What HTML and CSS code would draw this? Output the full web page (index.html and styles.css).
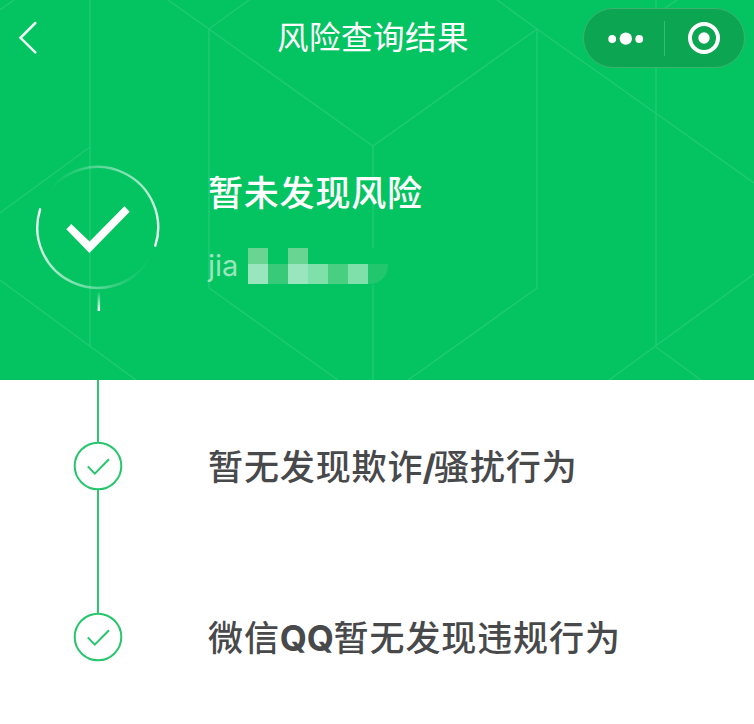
FILE: index.html
```html
<!DOCTYPE html>
<html lang="zh-CN">
<head>
<meta charset="utf-8">
<title>风险查询结果</title>
<link rel="stylesheet" href="styles.css">
</head>
<body>
<header class="hero">
  <svg class="pattern" viewBox="0 0 754 380" aria-hidden="true">
    <path d="M90 0V347M209 29V288M373 146V248M373 285V380M537 29V288M656 0V347M0 10L14 0M168 0L373 146L537 29L497 0M209 29L249 0M537 29L754 183M656 14L677 0M90 147L0 213M0 280L136 380M209 288L338 380M537 288L408 380M609 380L754 274M656 347L701 380"/>
  </svg>
  <nav class="navbar">
    <svg class="back" viewBox="0 0 20 34"><path d="M17.3 2L2.5 16.8L17.3 31.3"/></svg>
    <h1 class="title">风险查询结果</h1>
    <div class="capsule">
      <svg class="dots" viewBox="0 0 36 14"><circle cx="4.2" cy="8" r="3.9"/><circle cx="17.8" cy="7.6" r="6.2"/><circle cx="31.2" cy="8" r="3.9"/></svg>
      <span class="divider"></span>
      <svg class="target" viewBox="0 0 32 32"><circle class="ring" cx="16" cy="16" r="14"/><circle cx="16" cy="16" r="5.7"/></svg>
    </div>
  </nav>
  <section class="summary">
    <svg class="status" viewBox="0 0 126 150">
      <defs>
        <linearGradient id="upper" gradientUnits="userSpaceOnUse" x1="121" y1="82" x2="12" y2="30"><stop offset="0" stop-color="#fff" stop-opacity=".95"/><stop offset=".3" stop-color="#fff" stop-opacity=".65"/><stop offset=".7" stop-color="#fff" stop-opacity=".35"/><stop offset="1" stop-color="#fff" stop-opacity="0"/></linearGradient>
        <linearGradient id="lower" gradientUnits="userSpaceOnUse" x1="5" y1="45" x2="115" y2="96"><stop offset="0" stop-color="#fff" stop-opacity=".95"/><stop offset=".3" stop-color="#fff" stop-opacity=".65"/><stop offset=".7" stop-color="#fff" stop-opacity=".35"/><stop offset="1" stop-color="#fff" stop-opacity="0"/></linearGradient>
        <linearGradient id="stem" x1="0" y1="0" x2="0" y2="1"><stop offset="0" stop-color="#fff" stop-opacity="0"/><stop offset="1" stop-color="#fff"/></linearGradient>
      </defs>
      <path class="arc" stroke="url(#upper)" d="M120.3 80.7A60.4 60.4 0 0 0 12 29.6"/>
      <path class="arc" stroke="url(#lower)" d="M5.1 44.3A60.4 60.4 0 0 0 113.6 95"/>
      <rect x="62.6" y="126" width="2.5" height="20" fill="url(#stem)"/>
      <path class="tick" d="M31.3 64.3L36.2 59L54.6 76.6L89.4 41.3L94.7 46.7L54.4 88Z"/>
    </svg>
    <div class="result">
      <h2 class="verdict">暂未发现风险</h2>
      <div class="account">
        <span class="name">jia</span>
        <div class="mask"><i class="m4"></i><i></i><i class="m4"></i><i></i><i></i><i></i><i></i><i class="m6"></i><i class="m2"></i><i class="m6"></i><i class="m5"></i><i class="m3"></i><i class="m5"></i><i class="m1"></i></div>
      </div>
    </div>
  </section>
</header>
<main class="timeline">
  <div class="item">
    <div class="rail"><span class="line first"></span><svg class="mark" viewBox="0 0 50 50"><circle cx="25" cy="25" r="23.3"/><path d="M14.8 25.4L21.8 32.6L36 18.3"/></svg></div>
    <p class="text">暂无发现欺诈<b class="slash">/</b>骚扰行为</p>
  </div>
  <div class="item">
    <div class="rail"><span class="line"></span><svg class="mark" viewBox="0 0 50 50"><circle cx="25" cy="25" r="23.3"/><path d="M14.8 25.4L21.8 32.6L36 18.3"/></svg></div>
    <p class="text">微信<b class="latin">QQ</b>暂无发现违规行为</p>
  </div>
</main>
</body>
</html>
```
FILE: styles.css
```css
* { box-sizing: border-box; }
body {
  margin: 0;
  width: 754px;
  height: 724px;
  overflow: hidden;
  background: #fff;
  font-family: "Noto Sans CJK SC", sans-serif;
}
h1, h2, p { margin: 0; }
svg { display: block; flex: none; }
.hero {
  position: relative;
  height: 380px;
  background: #04c361;
  color: #fff;
}
.pattern {
  position: absolute;
  inset: 0;
  width: 754px;
  height: 380px;
  fill: none;
  stroke: #fff;
  stroke-opacity: .11;
  stroke-width: 1.5;
}
.navbar {
  position: relative;
  display: grid;
  grid-template-columns: 277px 306px 162px;
  align-items: center;
  height: 76px;
}
.back {
  width: 20px;
  height: 34px;
  margin-left: 18px;
  fill: none;
  stroke: #fff;
  stroke-opacity: .93;
  stroke-width: 2.5;
  stroke-linecap: round;
}
.title {
  padding-bottom: 7px;
  font-size: 31.5px;
  letter-spacing: .5px;
  line-height: 48px;
  font-weight: 400;
  white-space: nowrap;
}
.capsule {
  display: flex;
  align-items: center;
  width: 162px;
  height: 60px;
  padding-left: 24px;
  border: 1px solid #3db372;
  border-radius: 30px;
  background: #0ca552;
}
.dots { width: 36px; height: 14px; fill: #fff; }
.divider {
  width: 1px;
  height: 35px;
  margin: 0 23px 0 20px;
  background: #3db775;
}
.target { width: 32px; height: 32px; fill: #fff; }
.ring { fill: none; stroke: #fff; stroke-width: 4; }
.summary {
  position: relative;
  display: flex;
  padding: 89px 0 0 35px;
}
.status { width: 126px; height: 150px; }
.arc { fill: none; stroke-width: 2.4; stroke-linecap: round; }
.tick { fill: #fff; }
.result { margin-left: 47px; }
.verdict {
  font-size: 35px;
  letter-spacing: .8px;
  line-height: 52px;
  font-weight: 500;
  white-space: nowrap;
}
.account {
  display: flex;
  height: 36px;
  margin-top: 31px;
}
.name {
  width: 40px;
  font: 400 29px/36px Inter, sans-serif;
  color: #9be5bd;
}
.mask {
  display: grid;
  grid-template-columns: repeat(7, 20px);
  grid-template-rows: 16px 20px;
}
.m1 { background: #22c66d; border-bottom-right-radius: 18px; }
.m2 { background: #38ca78; }
.m3 { background: #49cf81; }
.m4 { background: #68d692; }
.m5 { background: #80e0aa; }
.m6 { background: #99e6be; }
.timeline { padding-left: 73px; }
.item {
  display: flex;
  align-items: flex-end;
}
.rail {
  display: flex;
  flex-direction: column;
  align-items: center;
  width: 50px;
}
.line {
  width: 2px;
  height: 124px;
  margin-bottom: -1.5px;
  background: #2fc672;
}
.line.first { height: 62px; }
.item + .item .line { margin-top: -1px; }
.mark {
  width: 50px;
  height: 50px;
  fill: none;
  stroke: #27c66d;
  stroke-width: 2;
}
.text {
  height: 51px;
  margin-left: 85px;
  font-size: 35px;
  letter-spacing: .9px;
  line-height: 50px;
  font-weight: 500;
  color: #48494b;
  white-space: nowrap;
}
.latin {
  font-family: Inter, sans-serif;
  font-weight: 700;
  font-size: 35px;
  letter-spacing: -.3px;
}
.slash {
  margin-left: -1px;
  font-family: Inter, sans-serif;
  font-weight: 700;
  letter-spacing: -2px;
}
```
